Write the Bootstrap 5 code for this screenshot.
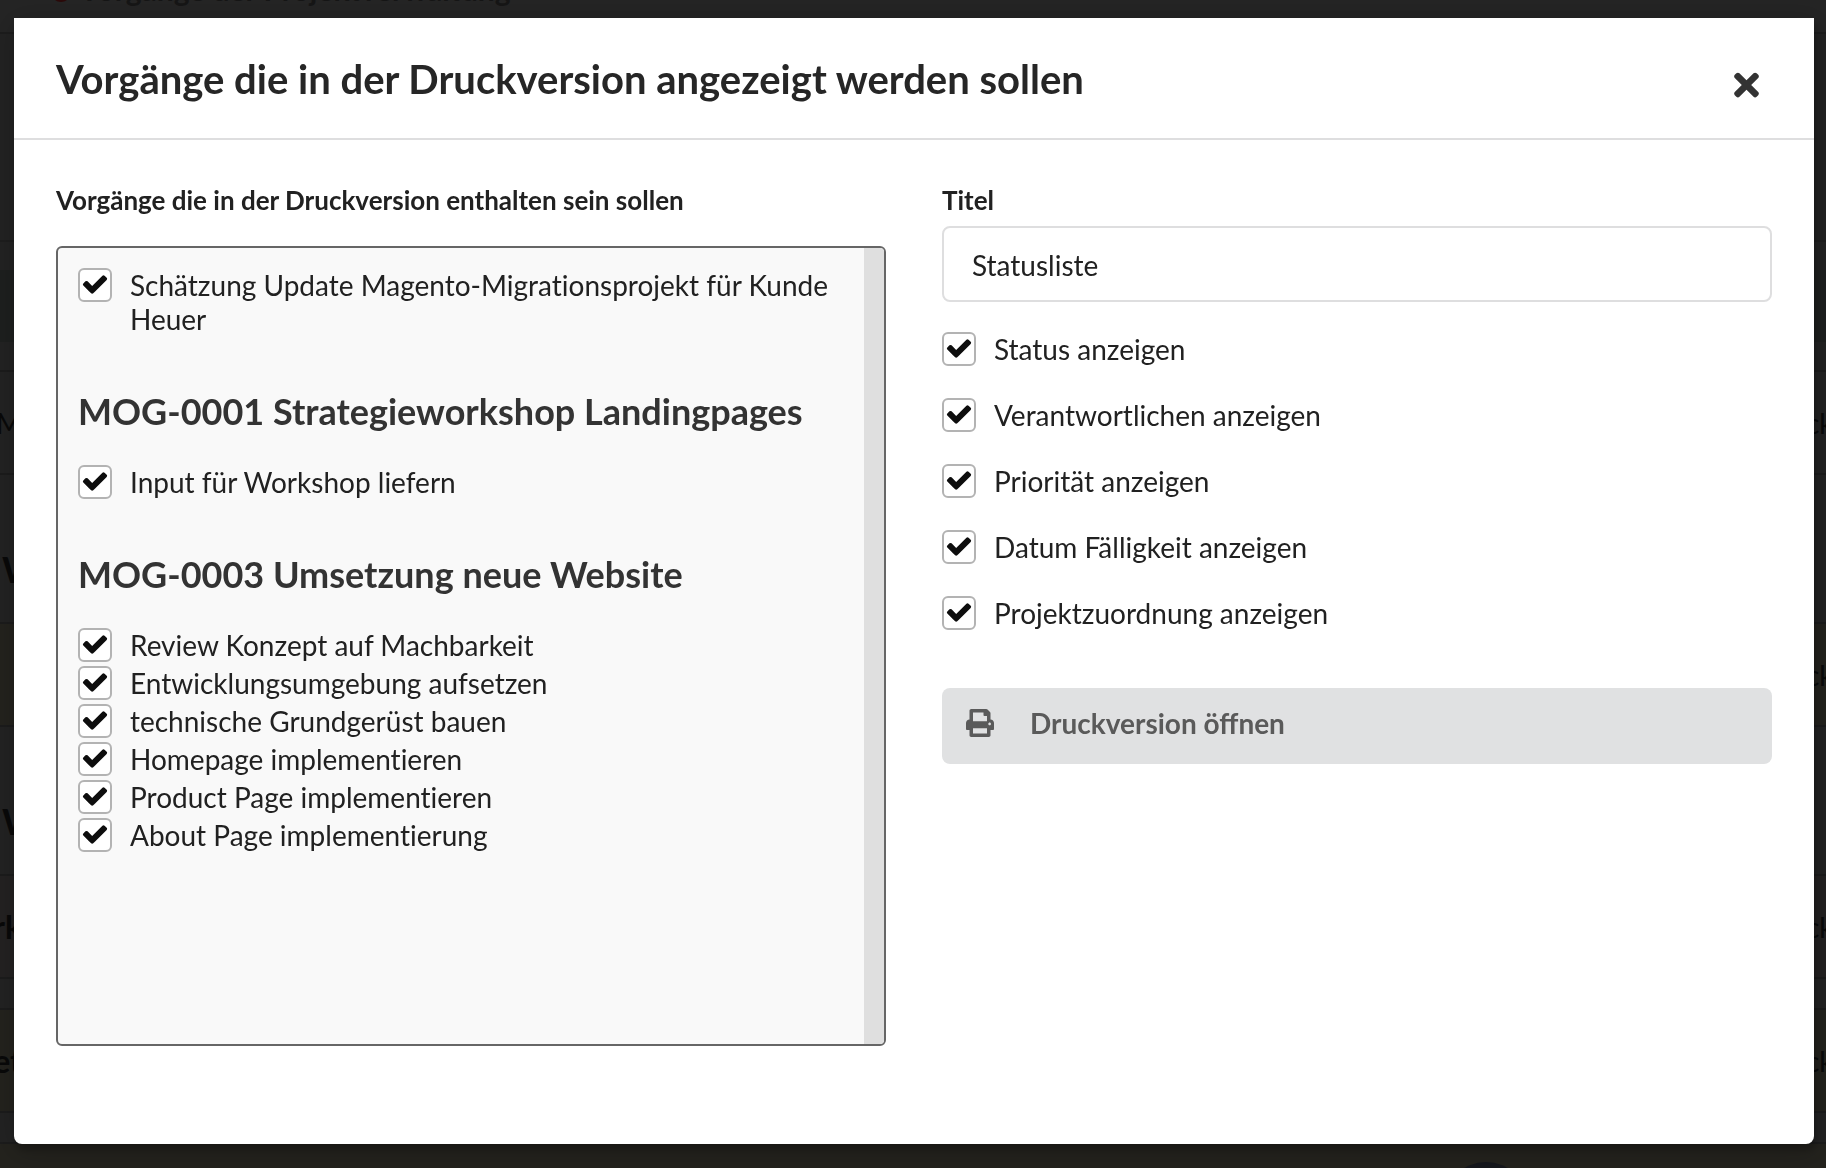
<!DOCTYPE html>
<html lang="de">
<head>
<meta charset="utf-8">
<meta name="viewport" content="width=device-width, initial-scale=1">
<title>Statusliste – Druckversion</title>
<link rel="stylesheet" href="https://cdn.jsdelivr.net/npm/bootstrap@5.3.0/dist/css/bootstrap.min.css">
<style>
  body { font-family: Lato, "Noto Sans", sans-serif; font-size: 28px; line-height: 34px; color: #212121; background: #232323; font-variant-ligatures: none; }

  /* dimmed page behind the dialog */
  .dimmed-page { color: #090909; background: #232323; }
  .page-head { height: 34px; line-height: 48px; padding-left: 51px; gap: 8px; background: #252525; border-bottom: 2px solid #1d1d1d; color: #161616; font-size: 30px; }
  .page-head-text { margin-top: -35px; }
  .status-dot { width: 20px; height: 20px; margin-top: -18px; background: #2c0a0a; }
  .page-tools { height: 208px; border-bottom: 2px solid #1e1e1e; }
  .page-columns { height: 72px; margin-top: 28px; margin-bottom: 28px; background: #1e201f; }
  .task-row { height: 105px; border-top: 2px solid #1c1c1c; border-bottom: 2px solid #1c1c1c; }
  .task-row.tone-warm { background: #24231e; }
  .task-row.tone-red { background: #242222; }
  .task-group { height: 147px; font-size: 36px; padding-left: 2px; padding-top: 40px; }
  .row-gap { height: 29px; }
  .task-start { width: 22px; }
  .task-start.fw-bold { font-size: 32px; }
  .task-end { width: 20px; }
  .chat-bubble { left: 1444px; top: 1162px; width: 84px; height: 84px; background: #15171d; }

  /* dialog */
  .print-dialog { margin: 18px 12px 24px 14px; max-width: none; }
  .print-dialog .modal-content { border: 0; border-radius: 0 0 8px 8px; color: inherit; box-shadow: 2px 6px 6px rgba(0,0,0,.2), 2px 6px 30px 4px rgba(0,0,0,.2); }
  .print-dialog .modal-header { padding: 36px 49px 33px 42px; border-bottom: 2px solid #dededf; border-radius: 0; }
  .print-dialog .modal-title { font-size: 40px; line-height: 51px; color: #262626; }
  .print-dialog .modal-body { padding: 42px 42px 98px; }
  .close-btn { width: 38px; height: 36px; color: #333; margin-top: 13px; }
  .cols { --bs-gutter-x: 56px; }
  .field-title { font-size: 26px; line-height: 36px; }

  .task-box { height: 800px; margin-top: 28px; border: 2px solid #666; border-radius: 6px; background: #f9f9f9; }
  .task-list { padding: 20px; }
  .scroll-track { width: 20px; background: #dfdfdf; }
  .task-list h3 { font-size: 36px; line-height: 46px; color: #333; margin: 52px 0 31px; }

  .tick { gap: 18px; margin-bottom: 4px; }
  .tick .form-check-input { width: 34px; height: 34px; margin: 0; border: 2px solid #b3b3b3; border-radius: 6px; background-color: #fff; }
  .tick .form-check-input:checked { background: #fff url("data:image/svg+xml,%3Csvg xmlns='http://www.w3.org/2000/svg' viewBox='0 0 1792 1792'%3E%3Cpath fill='%230d0d0d' d='M1671 566q0 40-28 68l-724 724-136 136q-28 28-68 28t-68-28l-136-136-362-362q-28-28-28-68t28-68l136-136q28-28 68-28t68 28l294 295 656-657q28-28 68-28t68 28l136 136q28 28 28 68z'/%3E%3C/svg%3E") 1px 0 / 28px 28px no-repeat; border-color: #b3b3b3; }
  .option-list { gap: 32px; margin-top: 30px; }
  .option-list .tick { margin-bottom: 0; }

  .title-input { height: 76px; margin-top: 8px; padding: 2px 28px 0; font-size: 28px; color: #212121; border: 2px solid #dededf; border-radius: 8px; }
  .print-btn { height: 76px; margin-top: 58px; padding: 17px 24px 23px; gap: 36px; font-size: 28px; line-height: 36px; color: #5a5a5a; background: #e0e1e2; border: 0; border-radius: 8px; }
</style>
<script src="https://cdn.jsdelivr.net/npm/bootstrap@5.3.0/dist/js/bootstrap.bundle.min.js"></script>
</head>
<body class="modal-open overflow-hidden">

<div class="dimmed-page vh-100 overflow-hidden position-relative" aria-hidden="true">
  <div class="page-head d-flex overflow-hidden"><span class="status-dot rounded-circle"></span><span class="page-head-text fw-bold">Vorgänge der Projektverwaltung</span></div>
  <div class="page-tools"></div>
  <div class="page-columns"></div>
  <div class="task-row d-flex align-items-center justify-content-between overflow-hidden"><span class="task-start d-flex justify-content-end">M</span><span class="task-end">ck</span></div>
  <div class="task-group d-flex align-items-center fw-bold">W</div>
  <div class="task-row tone-warm d-flex align-items-center justify-content-end overflow-hidden"><span class="task-end">ck</span></div>
  <div class="task-group d-flex align-items-center fw-bold">W</div>
  <div class="task-row tone-red d-flex align-items-center justify-content-between overflow-hidden"><span class="task-start d-flex justify-content-end fw-bold">rk</span><span class="task-end">ck</span></div>
  <div class="row-gap"></div>
  <div class="task-row tone-warm d-flex align-items-center justify-content-between overflow-hidden"><span class="task-start d-flex justify-content-end fw-bold">et</span><span class="task-end">ck</span></div>
  <div class="row-gap"></div>
  <div class="task-row tone-warm"></div>
  <div class="chat-bubble position-absolute rounded-circle"></div>
</div>

<div class="modal d-block" tabindex="-1" role="dialog" aria-modal="true" aria-labelledby="dialogTitle">
  <div class="modal-dialog print-dialog">
    <div class="modal-content">
      <div class="modal-header align-items-start">
        <h2 class="modal-title fw-bold" id="dialogTitle">Vorgänge die in der Druckversion angezeigt werden sollen</h2>
        <button type="button" class="close-btn btn p-0 border-0 d-flex align-items-center justify-content-center" aria-label="Schließen">
          <svg width="25" height="36" viewBox="0 0 352 512" fill="currentColor" aria-hidden="true"><path d="M242.72 256l100.07-100.07c12.28-12.28 12.28-32.19 0-44.48l-22.24-22.24c-12.28-12.28-32.19-12.28-44.48 0L176 189.28 75.93 89.21c-12.28-12.28-32.19-12.28-44.48 0L9.21 111.45c-12.28 12.28-12.28 32.19 0 44.48L109.28 256 9.21 356.07c-12.28 12.28-12.28 32.19 0 44.48l22.24 22.24c12.28 12.28 32.2 12.28 44.48 0L176 322.72l100.07 100.07c12.28 12.28 32.2 12.28 44.48 0l22.24-22.24c12.28-12.28 12.28-32.19 0-44.48L242.72 256z"/></svg>
        </button>
      </div>
      <div class="modal-body">
        <form class="row cols">
          <div class="col-6">
            <div class="field-title fw-bold" id="taskLabel">Vorgänge die in der Druckversion enthalten sein sollen</div>
            <div class="task-box d-flex overflow-hidden" role="group" aria-labelledby="taskLabel">
              <div class="task-list flex-grow-1">
                <div class="tick d-flex"><input class="form-check-input flex-shrink-0" type="checkbox" id="t1" checked><label for="t1">Schätzung Update Magento-Migrationsprojekt für Kunde Heuer</label></div>
                <h3 class="fw-bold">MOG-0001 Strategieworkshop Landingpages</h3>
                <div class="tick d-flex"><input class="form-check-input flex-shrink-0" type="checkbox" id="t2" checked><label for="t2">Input für Workshop liefern</label></div>
                <h3 class="fw-bold">MOG-0003 Umsetzung neue Website</h3>
                <div class="tick d-flex"><input class="form-check-input flex-shrink-0" type="checkbox" id="t3" checked><label for="t3">Review Konzept auf Machbarkeit</label></div>
                <div class="tick d-flex"><input class="form-check-input flex-shrink-0" type="checkbox" id="t4" checked><label for="t4">Entwicklungsumgebung aufsetzen</label></div>
                <div class="tick d-flex"><input class="form-check-input flex-shrink-0" type="checkbox" id="t5" checked><label for="t5">technische Grundgerüst bauen</label></div>
                <div class="tick d-flex"><input class="form-check-input flex-shrink-0" type="checkbox" id="t6" checked><label for="t6">Homepage implementieren</label></div>
                <div class="tick d-flex"><input class="form-check-input flex-shrink-0" type="checkbox" id="t7" checked><label for="t7">Product Page implementieren</label></div>
                <div class="tick d-flex"><input class="form-check-input flex-shrink-0" type="checkbox" id="t8" checked><label for="t8">About Page implementierung</label></div>
              </div>
              <div class="scroll-track flex-shrink-0"></div>
            </div>
          </div>
          <div class="col-6">
            <label class="field-title fw-bold d-block" for="listTitle">Titel</label>
            <input class="title-input form-control" type="text" id="listTitle" value="Statusliste">
            <div class="option-list d-flex flex-column">
              <div class="tick d-flex"><input class="form-check-input flex-shrink-0" type="checkbox" id="o1" checked><label for="o1">Status anzeigen</label></div>
              <div class="tick d-flex"><input class="form-check-input flex-shrink-0" type="checkbox" id="o2" checked><label for="o2">Verantwortlichen anzeigen</label></div>
              <div class="tick d-flex"><input class="form-check-input flex-shrink-0" type="checkbox" id="o3" checked><label for="o3">Priorität anzeigen</label></div>
              <div class="tick d-flex"><input class="form-check-input flex-shrink-0" type="checkbox" id="o4" checked><label for="o4">Datum Fälligkeit anzeigen</label></div>
              <div class="tick d-flex"><input class="form-check-input flex-shrink-0" type="checkbox" id="o5" checked><label for="o5">Projektzuordnung anzeigen</label></div>
            </div>
            <button type="button" class="print-btn btn w-100 d-flex align-items-center fw-bold">
              <svg width="28" height="28" viewBox="0 0 512 512" fill="currentColor" aria-hidden="true"><path d="M448 192V77.25c0-8.49-3.37-16.62-9.37-22.63L393.37 9.37c-6-6-14.14-9.37-22.63-9.37H96C78.33 0 64 14.33 64 32v160c-35.35 0-64 28.65-64 64v112c0 8.84 7.16 16 16 16h48v96c0 17.67 14.33 32 32 32h320c17.67 0 32-14.33 32-32v-96h48c8.84 0 16-7.16 16-16V256c0-35.35-28.65-64-64-64zm-64 256H128v-96h256v96zm0-224H128V64h192v48c0 8.84 7.16 16 16 16h48v96zm48 72c-13.25 0-24-10.75-24-24 0-13.26 10.75-24 24-24s24 10.74 24 24c0 13.25-10.75 24-24 24z"/></svg>
              <span>Druckversion öffnen</span>
            </button>
          </div>
        </form>
      </div>
    </div>
  </div>
</div>
</body>
</html>
